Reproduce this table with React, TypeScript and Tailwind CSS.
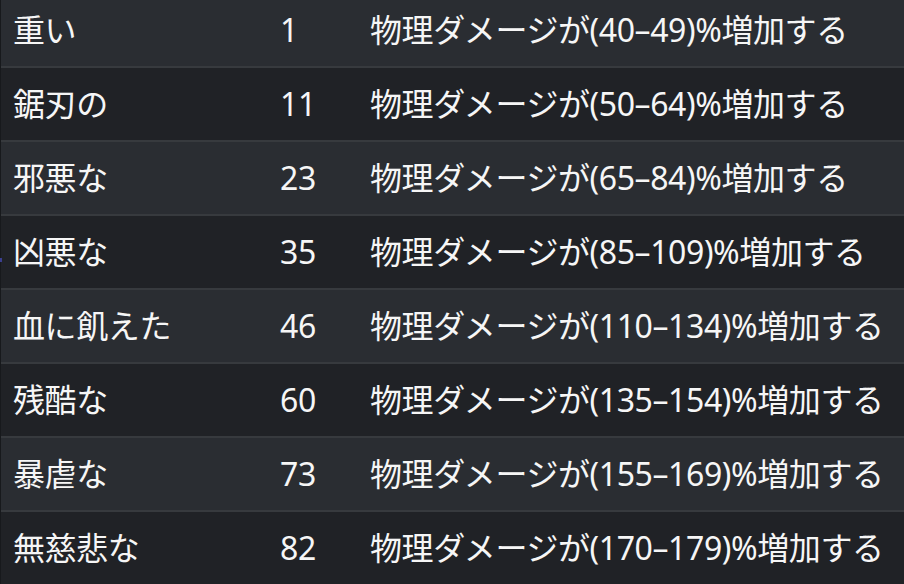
import React from "react";

type Affix = {
  name: string;
  level: number;
  effect: string;
};

const affixes: Affix[] = [
  { name: "重い", level: 1, effect: "物理ダメージが(40–49)%増加する" },
  { name: "鋸刃の", level: 11, effect: "物理ダメージが(50–64)%増加する" },
  { name: "邪悪な", level: 23, effect: "物理ダメージが(65–84)%増加する" },
  { name: "凶悪な", level: 35, effect: "物理ダメージが(85–109)%増加する" },
  { name: "血に飢えた", level: 46, effect: "物理ダメージが(110–134)%増加する" },
  { name: "残酷な", level: 60, effect: "物理ダメージが(135–154)%増加する" },
  { name: "暴虐な", level: 73, effect: "物理ダメージが(155–169)%増加する" },
  { name: "無慈悲な", level: 82, effect: "物理ダメージが(170–179)%増加する" },
];

export default function App() {
  return (
    <div
      className="relative h-[584px] w-[904px] overflow-hidden bg-[#212327] text-[32px] tracking-[-0.4px] text-[#f6f6f6]"
      style={{ fontFamily: '"Noto Sans", "Noto Sans CJK JP", sans-serif' }}
    >
      {/* table starts a little above the visible area */}
      <div className="-mt-[6px] border-l border-[#17191c]">
        {affixes.map((a, i) => (
          <div
            key={a.name}
            className={`flex h-[74px] items-center border-b-2 border-[#373a3e] ${
              i % 2 === 0 ? "bg-[#2a2d32]" : "bg-[#202226]"
            }`}
          >
            <div className="w-[279px] shrink-0 pl-[12px] whitespace-nowrap">{a.name}</div>
            <div className="w-[90px] shrink-0 whitespace-nowrap">{a.level}</div>
            <div className="whitespace-nowrap">{a.effect}</div>
          </div>
        ))}
      </div>
      <div className="absolute left-0 top-[258px] h-[4px] w-[2px] bg-[#3b3f8f]" />
    </div>
  );
}
